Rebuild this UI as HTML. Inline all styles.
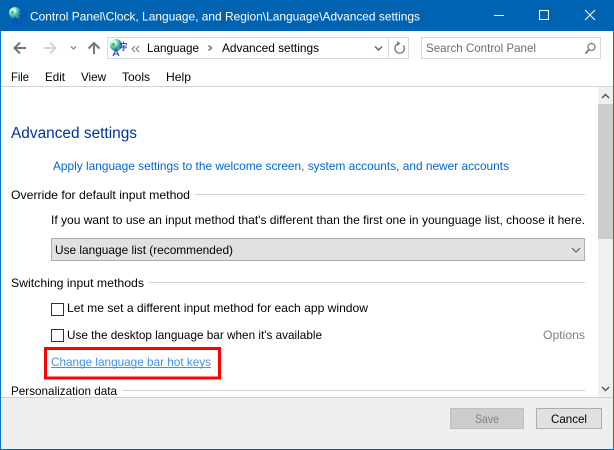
<!DOCTYPE html>
<html><head><meta charset="utf-8"><title>Advanced settings</title>
<style>
html,body{margin:0;padding:0;width:614px;height:450px;overflow:hidden;background:#fff}
svg{display:block}
text{font-family:"Liberation Sans","Noto Sans CJK SC",sans-serif;font-size:12px;fill:#000}
</style></head><body>
<svg width="614" height="450" viewBox="0 0 614 450" xmlns="http://www.w3.org/2000/svg">
<defs>
<radialGradient id="g" cx="32%" cy="30%" r="75%"><stop offset="0" stop-color="#ffffff"/><stop offset=".3" stop-color="#b8f2d8"/><stop offset=".55" stop-color="#3fc0b0"/><stop offset="1" stop-color="#1d62c8"/></radialGradient>
<g id="ico">
<circle cx="6" cy="6" r="6" fill="url(#g)"/>
<path d="M1.500 5l2-1.500 1.500 1-.5 2.500-1.500.5zM7.500 9l2.500-1 .5 1.500-2 1.500z" fill="#4cb85a"/>
<path d="M10.500 4.500h6M13.500 2.500v1.500M10.500 4.500v1.500M16.500 4.500v1.500M11 7h5.500M13.800 7v4.500l-1.500-.7M9.500 8.800h7.500" stroke="#2a3fc0" stroke-width=".9" fill="none"/>
<path d="M3 17l3-6.500 3 6.500M4.200 15h3.600" stroke="#2a3fc0" stroke-width="1.100" fill="none"/>
</g>
</defs>

<!-- window frame -->
<rect width="614" height="450" fill="#0063b1"/>
<rect x="0" y="31" width="1" height="418" fill="#1173c4"/>
<rect x="613" y="31" width="1" height="418" fill="#1173c4"/>
<rect x="1" y="31" width="612" height="418" fill="#fff"/>

<!-- title bar -->
<use href="#ico" x="9" y="7"/>
<text x="30" y="20.500" textLength="390" lengthAdjust="spacingAndGlyphs" style="fill:#fff">Control Panel\Clock, Language, and Region\Language\Advanced settings</text>
<path d="M494 15.500h10" stroke="#fff"/>
<rect x="539.500" y="10.500" width="9" height="9" fill="none" stroke="#fff"/>
<path d="M585 10l10 10M595 10l-10 10" stroke="#fff" fill="none"/>

<!-- nav -->
<path d="M26 48H15M20 42.500L14.500 48l5.500 5.500" stroke="#757575" stroke-width="2" fill="none"/>
<path d="M44 48h11M50 42.500L55.500 48 50 53.500" stroke="#d4d4d4" stroke-width="2" fill="none"/>
<path d="M71 46.500l2.500 2.500 2.500-2.500" stroke="#8a8a8a" stroke-width="1.300" fill="none"/>
<path d="M94 54V43M88.500 48.500L94 43l5.500 5.500" stroke="#757575" stroke-width="2" fill="none"/>

<!-- address bar -->
<rect x="107.500" y="37.500" width="301" height="21" fill="#fff" stroke="#d9d9d9"/>
<path d="M388.500 38v20" stroke="#d9d9d9"/>
<use href="#ico" x="110" y="39"/>
<path d="M135 46l-3 3 3 3M139 46l-3 3 3 3" stroke="#777" fill="none"/>
<text x="147" y="52" textLength="52" lengthAdjust="spacingAndGlyphs">Language</text>
<path d="M208.500 45.500l3 2.500-3 2.500" stroke="#777" stroke-width="1.500" fill="none"/>
<text x="222" y="52" textLength="97" lengthAdjust="spacingAndGlyphs">Advanced settings</text>
<path d="M375 46.500l3.500 3.500 3.500-3.500" stroke="#666" stroke-width="1.500" fill="none"/>
<path d="M403.500 45.500a4.800 4.800 0 1 1-5-1.800" stroke="#7f7f7f" stroke-width="1.400" fill="none"/>
<path d="M397 41v5l3.500-2.500z" fill="#7f7f7f"/>

<!-- search -->
<rect x="421.500" y="37.500" width="179" height="21" fill="#fff" stroke="#d9d9d9"/>
<text x="426" y="52" textLength="110" lengthAdjust="spacingAndGlyphs" style="fill:#6d6d6d">Search Control Panel</text>
<circle cx="591.500" cy="47" r="3.500" fill="none" stroke="#7a7a7a" stroke-width="1.300"/>
<path d="M589 49.500l-3.500 4" stroke="#7a7a7a" stroke-width="1.800"/>

<!-- menu -->
<text x="11" y="81" textLength="18" lengthAdjust="spacingAndGlyphs">File</text>
<text x="45" y="81" textLength="20" lengthAdjust="spacingAndGlyphs">Edit</text>
<text x="81" y="81" textLength="25" lengthAdjust="spacingAndGlyphs">View</text>
<text x="122" y="81" textLength="28" lengthAdjust="spacingAndGlyphs">Tools</text>
<text x="166" y="81" textLength="25" lengthAdjust="spacingAndGlyphs">Help</text>
<path d="M1 86.500h612" stroke="#d4d4d4"/>

<!-- scrollbar -->
<rect x="598" y="87" width="15" height="310" fill="#f0f0f0"/>
<rect x="598" y="104" width="15" height="135" fill="#cdcdcd"/>
<path d="M602 98l3.500-3.500L609 98" stroke="#555" stroke-width="1.500" fill="none"/>
<path d="M602 387l3.500 3.500L609 387" stroke="#555" stroke-width="1.500" fill="none"/>

<!-- content -->
<text x="11" y="138" textLength="126" lengthAdjust="spacingAndGlyphs" style="font-size:15.500px;fill:#003399">Advanced settings</text>
<text x="53" y="170" textLength="456" lengthAdjust="spacingAndGlyphs" style="fill:#0066cc">Apply language settings to the welcome screen, system accounts, and newer accounts</text>

<text x="11" y="199" textLength="179" lengthAdjust="spacingAndGlyphs">Override for default input method</text>
<path d="M195 194.500h390" stroke="#d0d0d0"/>
<text x="51" y="224" textLength="534" lengthAdjust="spacingAndGlyphs">If you want to use an input method that's different than the first one in younguage list, choose it here.</text>

<rect x="51.500" y="238.500" width="533" height="22" fill="#e1e1e1" stroke="#adadad"/>
<text x="55" y="254" textLength="178" lengthAdjust="spacingAndGlyphs">Use language list (recommended)</text>
<path d="M572 248l4 4 4-4" stroke="#555" fill="none"/>

<text x="11" y="287" textLength="133" lengthAdjust="spacingAndGlyphs">Switching input methods</text>
<path d="M149 282.500h436" stroke="#d0d0d0"/>

<rect x="51.500" y="303.500" width="12" height="12" fill="#fff" stroke="#333"/>
<text x="67" y="312" textLength="301" lengthAdjust="spacingAndGlyphs">Let me set a different input method for each app window</text>
<rect x="51.500" y="329.500" width="12" height="12" fill="#fff" stroke="#333"/>
<text x="67" y="339" textLength="255" lengthAdjust="spacingAndGlyphs">Use the desktop language bar when it's available</text>
<text x="543" y="339" textLength="42" lengthAdjust="spacingAndGlyphs" style="fill:#7d7d8c">Options</text>

<text x="51" y="366" textLength="160" lengthAdjust="spacingAndGlyphs" style="fill:#3b94ee">Change language bar hot keys</text>
<path d="M51 367.500h160" stroke="#3b94ee"/>
<rect x="45.500" y="348.500" width="174" height="29.500" fill="none" stroke="#fe0000" stroke-width="3"/>

<text x="11" y="395" textLength="106" lengthAdjust="spacingAndGlyphs">Personalization data</text>
<path d="M122 390.500h463" stroke="#d0d0d0"/>

<!-- footer -->
<rect x="1" y="397" width="612" height="52" fill="#efefef"/>
<path d="M1 397.500h612" stroke="#d0d0d0"/>
<rect x="450.500" y="408.500" width="73" height="20" fill="#cccccc" stroke="#bfbfbf"/>
<text x="475" y="423" textLength="24" lengthAdjust="spacingAndGlyphs" style="fill:#838383">Save</text>
<rect x="536.500" y="408.500" width="65" height="20" fill="#e1e1e1" stroke="#adadad"/>
<text x="551" y="423" textLength="36" lengthAdjust="spacingAndGlyphs">Cancel</text>
</svg>
</body></html>
